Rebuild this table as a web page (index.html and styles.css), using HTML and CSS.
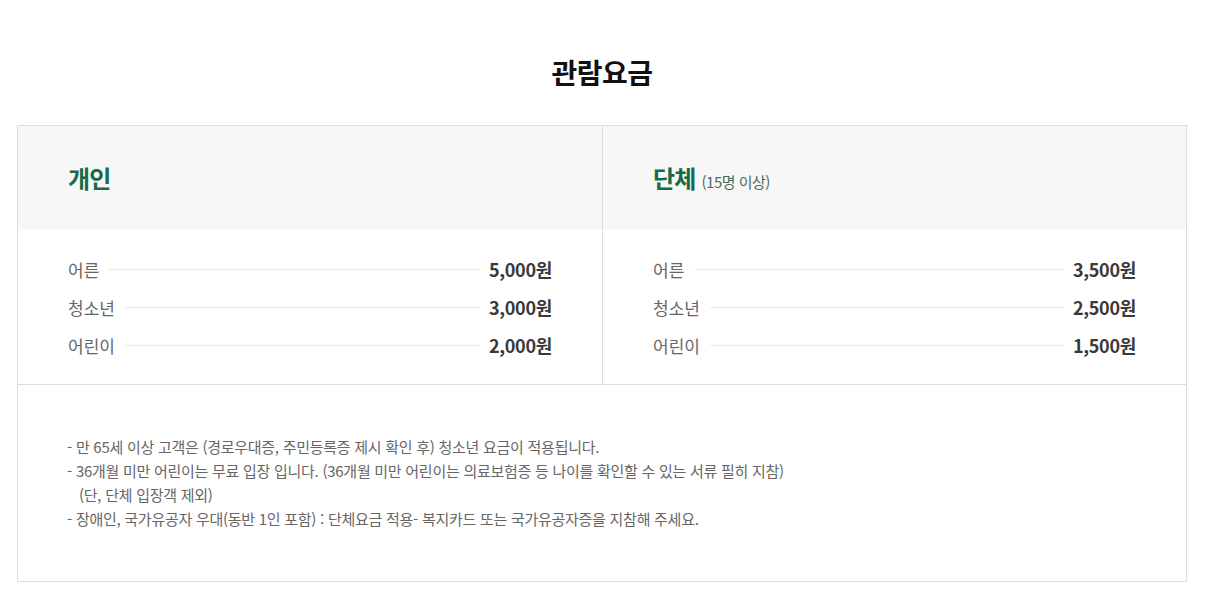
FILE: index.html
```html
<!DOCTYPE html>
<html lang="ko">
<head>
    <meta charset="UTF-8">
    <meta name="viewport" content="width=device-width, initial-scale=1.0">
    <title>관람요금</title>
    <link rel="stylesheet" href="styles.css">
</head>
<body>
    <div class="fee">
        <h2 class="fee-title">관람요금</h2>

        <div class="fee-box">
            <div class="fee-cols">
                <!-- 개인 -->
                <div class="fee-col">
                    <div class="fee-head">
                        <h3>개인</h3>
                    </div>
                    <ul class="fee-list">
                        <li><span class="label">어른</span><span class="dots"></span><span class="price">5,000원</span></li>
                        <li><span class="label">청소년</span><span class="dots"></span><span class="price">3,000원</span></li>
                        <li><span class="label">어린이</span><span class="dots"></span><span class="price">2,000원</span></li>
                    </ul>
                </div>

                <!-- 단체 -->
                <div class="fee-col">
                    <div class="fee-head">
                        <h3>단체 <small>(15명 이상)</small></h3>
                    </div>
                    <ul class="fee-list">
                        <li><span class="label">어른</span><span class="dots"></span><span class="price">3,500원</span></li>
                        <li><span class="label">청소년</span><span class="dots"></span><span class="price">2,500원</span></li>
                        <li><span class="label">어린이</span><span class="dots"></span><span class="price">1,500원</span></li>
                    </ul>
                </div>
            </div>

            <!-- 안내 -->
            <div class="fee-notes">
                <p>- 만 65세 이상 고객은 (경로우대증, 주민등록증 제시 확인 후) 청소년 요금이 적용됩니다.</p>
                <p>- 36개월 미만 어린이는 무료 입장 입니다. (36개월 미만 어린이는 의료보험증 등 나이를 확인할 수 있는 서류 필히 지참)</p>
                <p class="indent">(단, 단체 입장객 제외)</p>
                <p>- 장애인, 국가유공자 우대(동반 1인 포함) : 단체요금 적용- 복지카드 또는 국가유공자증을 지참해 주세요.</p>
            </div>
        </div>
    </div>
</body>
</html>
```

FILE: styles.css
```css
body {
    font-family: "Noto Sans CJK KR", "Noto Sans", sans-serif;
    background-color: #fff;
    color: #666;
    margin: 0;
}
.fee {
    width: 1170px;
    margin: 0 17px;
    padding-top: 49px;
}
.fee-title {
    margin: 0 0 30px;
    text-align: center;
    font-size: 28px;
    font-weight: 700;
    line-height: 46px;
    color: #111;
    letter-spacing: -0.5px;
}
.fee-box {
    border: 1px solid #dddddd;
}
.fee-cols {
    display: grid;
    grid-template-columns: 584px 1fr;
    border-bottom: 1px solid #dddddd;
}
.fee-col + .fee-col {
    border-left: 1px solid #dddddd;
}
.fee-head {
    background-color: #f7f7f7;
    height: 103px;
    padding: 0 50px;
    display: flex;
    align-items: center;
}
.fee-head h3 {
    margin: 0;
    font-size: 24px;
    font-weight: 700;
    color: #17694a;
    letter-spacing: -0.8px;
}
.fee-head h3 small {
    font-size: 15px;
    font-weight: 400;
    color: #4d6b5d;
    letter-spacing: -0.5px;
}
.fee-list {
    list-style: none;
    margin: 0;
    padding: 21px 50px 20px;
}
.fee-list li {
    display: flex;
    align-items: center;
    height: 38px;
}
.fee-list .label {
    font-size: 17px;
    color: #666;
}
.fee-list .dots {
    flex: 1;
    margin: 0 10px;
    border-top: 1px dotted #d6d6d6;
}
.fee-list .price {
    font-size: 18px;
    font-weight: 700;
    color: #3a3a3a;
    letter-spacing: -0.3px;
}
.fee-notes {
    padding: 50px 49px 50px;
    height: 96px;
}
.fee-notes p {
    margin: 0;
    font-size: 15px;
    line-height: 24px;
    color: #666;
    letter-spacing: -0.27px;
}
.fee-notes .indent {
    padding-left: 12px;
}
```
